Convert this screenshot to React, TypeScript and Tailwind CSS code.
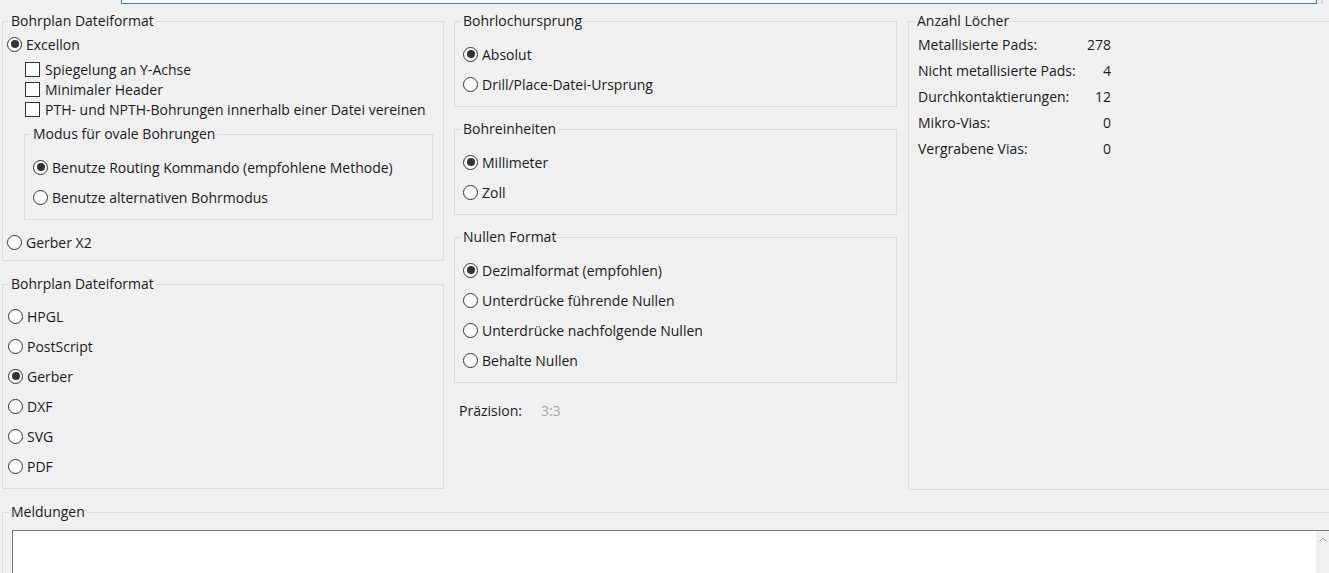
import type { ReactNode } from 'react';

const font = { fontFamily: '"Open Sans", "Noto Sans", sans-serif' };

function Radio({ checked = false }: { checked?: boolean }) {
    return (
        <span className="flex h-[15px] w-[15px] shrink-0 items-center justify-center rounded-full border border-[#333333] bg-white">
            {checked && <span className="h-[8px] w-[8px] rounded-full bg-[#333333]" />}
        </span>
    );
}

function RadioRow({ label, checked, className = '' }: { label: string; checked?: boolean; className?: string }) {
    return (
        <div className={`flex h-[20px] items-center gap-[4px] ${className}`}>
            <Radio checked={checked} />
            <span className="whitespace-nowrap">{label}</span>
        </div>
    );
}

function CheckRow({ label }: { label: string }) {
    return (
        <div className="ml-[22px] flex h-[20px] items-center gap-[5px]">
            <span className="h-[15px] w-[15px] shrink-0 border border-[#333333] bg-white" />
            <span className="whitespace-nowrap">{label}</span>
        </div>
    );
}

function Group({ title, className = '', children }: { title: string; className?: string; children: ReactNode }) {
    return (
        <fieldset className={`border border-[#dcdcdc] ${className}`}>
            <legend className="ml-[6px] h-[18px] px-[2px] leading-[18px]">{title}</legend>
            {children}
        </fieldset>
    );
}

export default function App() {
    const counts = [
        { label: 'Metallisierte Pads:', value: 278 },
        { label: 'Nicht metallisierte Pads:', value: 4 },
        { label: 'Durchkontaktierungen:', value: 12 },
        { label: 'Mikro-Vias:', value: 0 },
        { label: 'Vergrabene Vias:', value: 0 },
    ];

    return (
        <div className="h-[573px] w-[1329px] overflow-hidden bg-[#f0f0f0] text-[14px] text-[#1b1b1b]" style={font}>
            {/* top input remnant */}
            <div className="flex h-[4px]">
                <div className="ml-[121px] h-full w-[1196px] shrink-0 border-x border-b border-[#2f7fc1] bg-white" />
                <div className="ml-[4px] h-full w-[2px] shrink-0 bg-[#d0d0d0]" />
            </div>

            <div className="mt-[8px] flex">
                {/* left column */}
                <div className="ml-[2px] flex w-[442px] shrink-0 flex-col">
                    <Group title="Bohrplan Dateiformat" className="pb-[8px]">
                        <RadioRow label="Excellon" checked className="ml-[4px] mt-[4px]" />
                        <div className="mt-[5px]">
                            <CheckRow label="Spiegelung an Y-Achse" />
                            <CheckRow label="Minimaler Header" />
                            <CheckRow label="PTH- und NPTH-Bohrungen innerhalb einer Datei vereinen" />
                        </div>
                        <fieldset className="ml-[21px] mt-[6px] w-[409px] border border-[#dcdcdc] pb-[12px]">
                            <legend className="ml-[6px] h-[18px] px-[2px] leading-[18px]">Modus für ovale Bohrungen</legend>
                            <div className="ml-[8px] mt-[14px] flex flex-col gap-[10px]">
                                <RadioRow label="Benutze Routing Kommando (empfohlene Methode)" checked />
                                <RadioRow label="Benutze alternativen Bohrmodus" />
                            </div>
                        </fieldset>
                        <RadioRow label="Gerber X2" className="ml-[4px] mt-[12px]" />
                    </Group>

                    <Group title="Bohrplan Dateiformat" className="mt-[14px] pb-[12px]">
                        <div className="ml-[5px] mt-[13px] flex flex-col gap-[10px]">
                            <RadioRow label="HPGL" />
                            <RadioRow label="PostScript" />
                            <RadioRow label="Gerber" checked />
                            <RadioRow label="DXF" />
                            <RadioRow label="SVG" />
                            <RadioRow label="PDF" />
                        </div>
                    </Group>
                </div>

                {/* middle column */}
                <div className="ml-[10px] flex w-[443px] shrink-0 flex-col">
                    <Group title="Bohrlochursprung" className="pb-[12px]">
                        <div className="ml-[8px] mt-[14px] flex flex-col gap-[10px]">
                            <RadioRow label="Absolut" checked />
                            <RadioRow label="Drill/Place-Datei-Ursprung" />
                        </div>
                    </Group>
                    <Group title="Bohreinheiten" className="mt-[13px] pb-[12px]">
                        <div className="ml-[8px] mt-[14px] flex flex-col gap-[10px]">
                            <RadioRow label="Millimeter" checked />
                            <RadioRow label="Zoll" />
                        </div>
                    </Group>
                    <Group title="Nullen Format" className="mt-[13px] pb-[12px]">
                        <div className="ml-[8px] mt-[14px] flex flex-col gap-[10px]">
                            <RadioRow label="Dezimalformat (empfohlen)" checked />
                            <RadioRow label="Unterdrücke führende Nullen" />
                            <RadioRow label="Unterdrücke nachfolgende Nullen" />
                            <RadioRow label="Behalte Nullen" />
                        </div>
                    </Group>
                    <div className="ml-[5px] mt-[17px] flex h-[20px] items-center">
                        <span className="w-[82px]">Präzision:</span>
                        <span className="text-[#a8a8a8]">3:3</span>
                    </div>
                </div>

                {/* right column */}
                <div className="ml-[11px] flex w-[430px] shrink-0 flex-col">
                    <fieldset className="h-[478px] border border-r-0 border-[#dcdcdc]">
                        <legend className="ml-[6px] h-[18px] px-[2px] leading-[18px]">Anzahl Löcher</legend>
                        <div className="ml-[9px] mt-[1px] grid w-[193px] grid-cols-[150px_43px]">
                            {counts.map((c) => (
                                <div key={c.label} className="contents">
                                    <span className="flex h-[26px] items-center whitespace-nowrap">{c.label}</span>
                                    <span className="flex h-[26px] items-center justify-end">{c.value}</span>
                                </div>
                            ))}
                        </div>
                    </fieldset>
                </div>
            </div>

            {/* Meldungen */}
            <fieldset className="ml-[2px] mt-[13px] h-[80px] border border-r-0 border-[#dcdcdc]">
                <legend className="ml-[6px] h-[18px] px-[2px] leading-[18px]">Meldungen</legend>
                <div className="ml-[9px] mt-[9px] flex h-[60px] border-l border-t border-[#7a7a7a]">
                    <div className="flex-1 bg-white" />
                    <div className="flex w-[13px] justify-center bg-[#f0f0f0] pt-[6px]">
                        <svg width="8" height="5" viewBox="0 0 8 5">
                            <polyline points="0.5,4.5 4,1 7.5,4.5" fill="none" stroke="#a0a0a0" strokeWidth="1" />
                        </svg>
                    </div>
                </div>
            </fieldset>
        </div>
    );
}
